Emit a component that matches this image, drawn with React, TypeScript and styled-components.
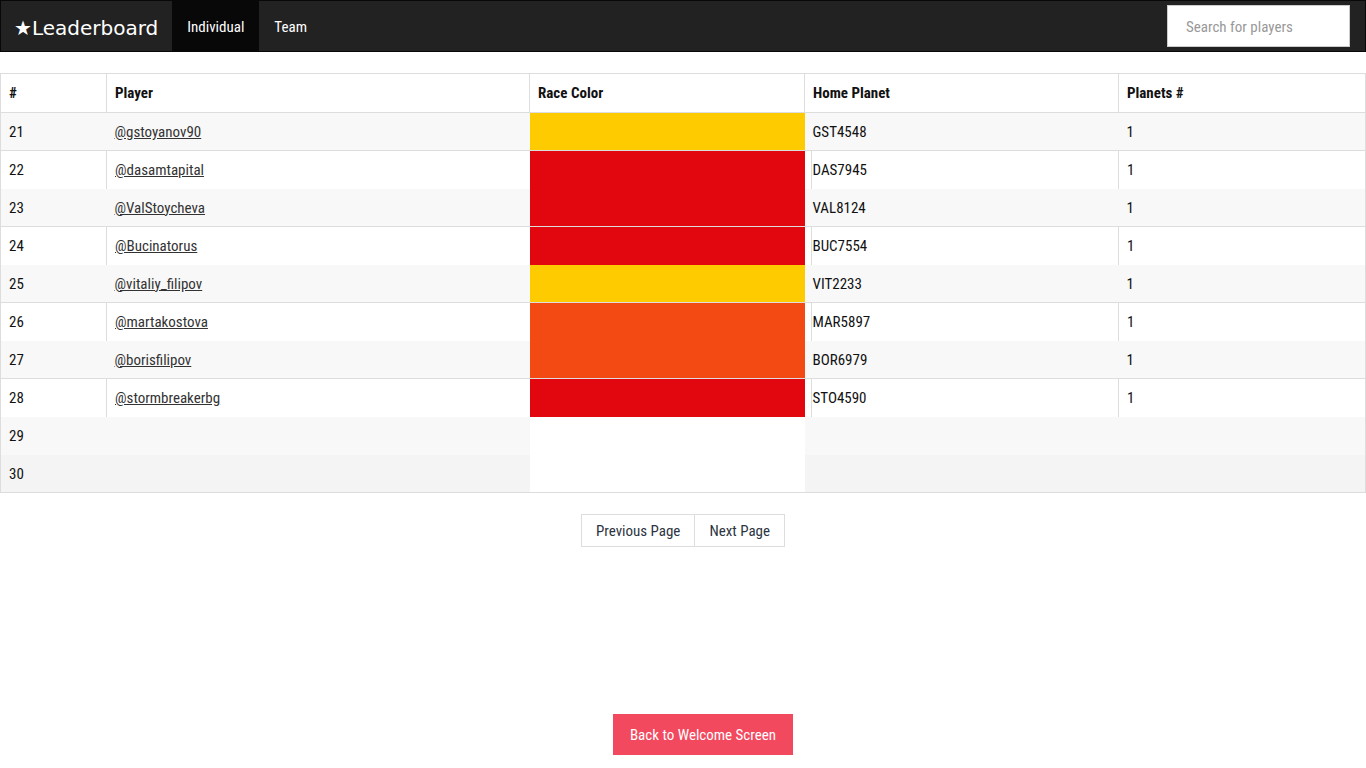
import React from "react";
import styled, { createGlobalStyle } from "styled-components";

const GlobalStyle = createGlobalStyle`
  html, body {
    margin: 0;
    padding: 0;
    background: #fff;
  }
  body {
    font-family: "Roboto Condensed", "Liberation Sans Narrow", Roboto, sans-serif;
    font-stretch: condensed;
    font-size: 14px;
    color: #111;
  }
`;

const Page = styled.div`
  width: 100%;
  min-height: 768px;
  display: flex;
  flex-direction: column;
`;

const Navbar = styled.nav`
  height: 50px;
  background: #222;
  border: 1px solid #080808;
  display: flex;
  align-items: stretch;
`;

const Brand = styled.div`
  font-family: "DejaVu Sans", sans-serif;
  font-stretch: normal;
  font-size: 20px;
  color: #fff;
  padding: 0 14px 0 13px;
  display: flex;
  align-items: center;
  padding-top: 3px;
`;

const NavItem = styled.a<{ $active?: boolean }>`
  display: flex;
  align-items: center;
  padding: 2px 15px 0;
  font-size: 15px;
  color: #fff;
  text-decoration: none;
  background: ${(p) => (p.$active ? "#080808" : "transparent")};
`;

const Spacer = styled.div`
  flex: 1;
`;

const Search = styled.input`
  align-self: center;
  width: 183px;
  height: 42px;
  box-sizing: border-box;
  margin-right: 15px;
  border: 1px solid #ccc;
  padding: 2px 18px 0;
  font-family: inherit;
  font-stretch: condensed;
  font-size: 15px;
  outline: none;
  &::placeholder {
    color: #999;
  }
`;

const Table = styled.table`
  margin-top: 21px;
  width: 100%;
  table-layout: fixed;
  border-collapse: collapse;
  border: 1px solid #ddd;
`;

const Th = styled.th<{ $w?: number }>`
  box-sizing: border-box;
  width: ${(p) => (p.$w ? `${p.$w}px` : "auto")};
  height: 39px;
  padding: 0 8px;
  text-align: left;
  font-weight: 700;
  font-size: 15px;
  border: 1px solid #ddd;
`;

const Row = styled.tr<{ $bg: string; $lined: boolean }>`
  height: 38px;
  background: ${(p) => p.$bg};
  border-top: ${(p) => (p.$lined ? "1px solid #ddd" : "none")};
`;

const Td = styled.td<{ $lined?: boolean }>`
  padding: 1px 8px 0;
  font-size: 15px;
  border-left: ${(p) => (p.$lined ? "1px solid #ddd" : "none")};
`;

const ColorCell = styled.td<{ $color: string }>`
  padding: 0;
  background: ${(p) => p.$color};
`;

const PlanetCell = styled.td<{ $lined?: boolean }>`
  padding: 1px 8px 0;
  font-size: 15px;
  background-image: ${(p) =>
    p.$lined
      ? "linear-gradient(to right, #fff 0, #fff 6px, #ddd 6px, #ddd 7px, transparent 7px)"
      : "none"};
`;

const PlayerLink = styled.a`
  color: #333;
  text-decoration: underline;
`;

const Pager = styled.div`
  display: flex;
  justify-content: center;
  margin-top: 21px;
`;

const PageButton = styled.button`
  height: 33px;
  padding: 0 14px;
  background: #fff;
  border: 1px solid #ddd;
  font-family: inherit;
  font-stretch: condensed;
  font-size: 15px;
  color: #2c3440;
  & + & {
    border-left: none;
  }
`;

const Footer = styled.div`
  display: flex;
  justify-content: center;
  margin-top: 167px;
  padding-left: 40px;
`;

const BackButton = styled.button`
  width: 180px;
  height: 41px;
  background: #f2495f;
  border: none;
  color: #fff;
  font-family: inherit;
  font-stretch: condensed;
  font-size: 15px;
`;

const YELLOW = "#fecb00";
const RED = "#e2060f";
const ORANGE = "#f34a13";

type Player = {
  rank: number;
  name?: string;
  color?: string;
  planet?: string;
  planets?: number;
};

const players: Player[] = [
  { rank: 21, name: "@gstoyanov90", color: YELLOW, planet: "GST4548", planets: 1 },
  { rank: 22, name: "@dasamtapital", color: RED, planet: "DAS7945", planets: 1 },
  { rank: 23, name: "@ValStoycheva", color: RED, planet: "VAL8124", planets: 1 },
  { rank: 24, name: "@Bucinatorus", color: RED, planet: "BUC7554", planets: 1 },
  { rank: 25, name: "@vitaliy_filipov", color: YELLOW, planet: "VIT2233", planets: 1 },
  { rank: 26, name: "@martakostova", color: ORANGE, planet: "MAR5897", planets: 1 },
  { rank: 27, name: "@borisfilipov", color: ORANGE, planet: "BOR6979", planets: 1 },
  { rank: 28, name: "@stormbreakerbg", color: RED, planet: "STO4590", planets: 1 },
  { rank: 29 },
  { rank: 30 },
];

export default function App() {
  return (
    <Page>
      <GlobalStyle />
      <Navbar>
        <Brand>★Leaderboard</Brand>
        <NavItem $active>Individual</NavItem>
        <NavItem>Team</NavItem>
        <Spacer />
        <Search placeholder="Search for players" />
      </Navbar>
      <Table>
        <thead>
          <tr>
            <Th $w={106}>#</Th>
            <Th $w={423}>Player</Th>
            <Th $w={275}>Race Color</Th>
            <Th $w={314}>Home Planet</Th>
            <Th>Planets #</Th>
          </tr>
        </thead>
        <tbody>
          {players.map((p, i) => {
            const lined = i % 2 === 1 && !!p.name;
            const bg = lined ? "#fff" : p.rank === 30 ? "#f4f4f4" : "#f8f8f8";
            return (
              <Row key={p.rank} $bg={bg} $lined={lined}>
                <Td>{p.rank}</Td>
                <Td $lined={lined}>
                  {p.name && <PlayerLink href="#">{p.name}</PlayerLink>}
                </Td>
                <ColorCell $color={p.color ?? "#fff"} />
                <PlanetCell $lined={lined}>{p.planet}</PlanetCell>
                <Td $lined={lined}>{p.planets}</Td>
              </Row>
            );
          })}
        </tbody>
      </Table>
      <Pager>
        <PageButton>Previous Page</PageButton>
        <PageButton>Next Page</PageButton>
      </Pager>
      <Footer>
        <BackButton>Back to Welcome Screen</BackButton>
      </Footer>
    </Page>
  );
}
